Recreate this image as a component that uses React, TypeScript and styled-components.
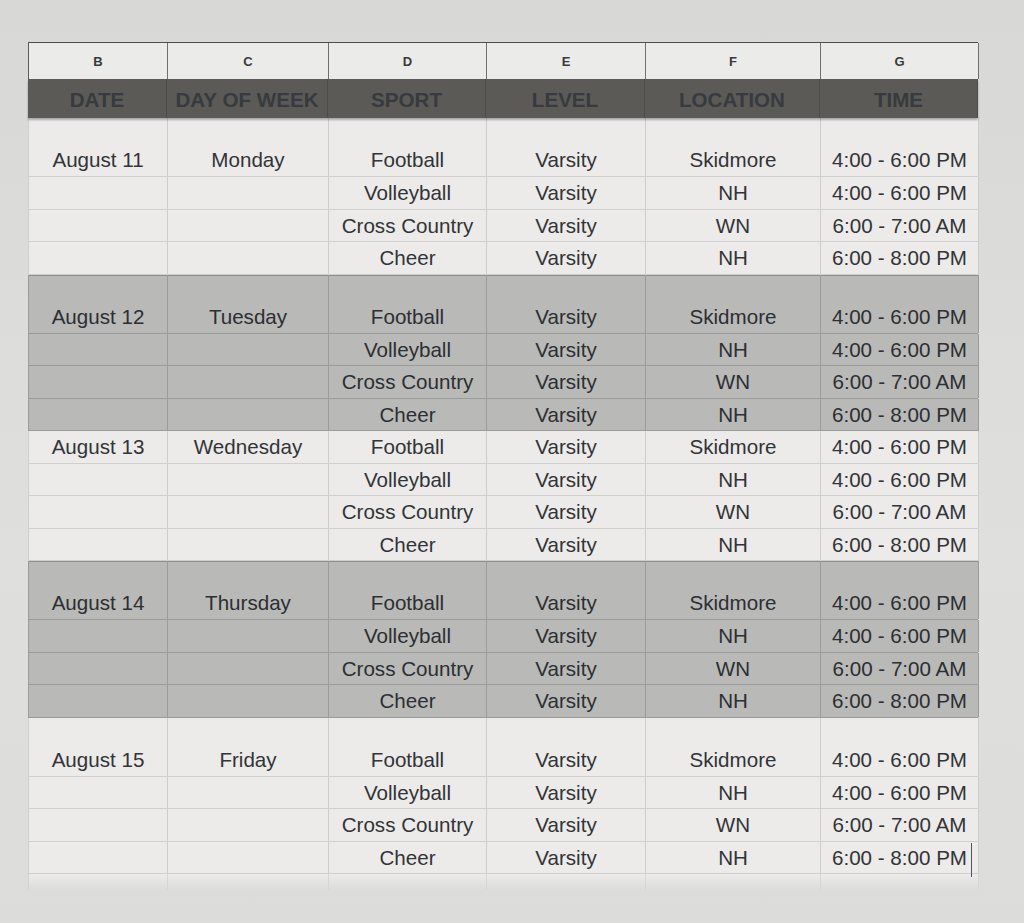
import React from 'react'
import styled, { createGlobalStyle } from 'styled-components'

const GlobalStyle = createGlobalStyle`
    html, body {
        margin: 0;
        padding: 0;
        background: #dcdcda;
    }
    body {
        font-family: 'Liberation Sans', Arial, sans-serif;
    }
`

const COLS = '139px 161px 158px 159px 175px 158px'

interface ISession {
    sport: string
    location: string
    time: string
}

interface IDay {
    date: string
    weekday: string
    shade: boolean
    tall: boolean
}

const sessions: ISession[] = [
    { sport: 'Football', location: 'Skidmore', time: '4:00 - 6:00 PM' },
    { sport: 'Volleyball', location: 'NH', time: '4:00 - 6:00 PM' },
    { sport: 'Cross Country', location: 'WN', time: '6:00 - 7:00 AM' },
    { sport: 'Cheer', location: 'NH', time: '6:00 - 8:00 PM' }
]

const days: IDay[] = [
    { date: 'August 11', weekday: 'Monday', shade: false, tall: true },
    { date: 'August 12', weekday: 'Tuesday', shade: true, tall: true },
    { date: 'August 13', weekday: 'Wednesday', shade: false, tall: false },
    { date: 'August 14', weekday: 'Thursday', shade: true, tall: true },
    { date: 'August 15', weekday: 'Friday', shade: false, tall: true }
]

const letters = ['B', 'C', 'D', 'E', 'F', 'G']
const titles = ['DATE', 'DAY OF WEEK', 'SPORT', 'LEVEL', 'LOCATION', 'TIME']

export default function App() {
    return (
        <Page>
            <GlobalStyle />
            <Sheet>
                <LetterRow>
                    {letters.map(l => (
                        <LetterCell key={l}>{l}</LetterCell>
                    ))}
                </LetterRow>
                <TitleBar>
                    {titles.map(t => (
                        <TitleCell key={t}>{t}</TitleCell>
                    ))}
                </TitleBar>
                {days.map(day => (
                    <Group key={day.date} shade={day.shade}>
                        {sessions.map((s, i) => {
                            // the cursor sits in the very last cell
                            const last = day.date === 'August 15' && i === sessions.length - 1
                            return (
                                <Row key={s.sport} shade={day.shade} tall={day.tall && i === 0}>
                                    <Cell>{i === 0 ? day.date : ''}</Cell>
                                    <Cell>{i === 0 ? day.weekday : ''}</Cell>
                                    <Cell>{s.sport}</Cell>
                                    <Cell>Varsity</Cell>
                                    <Cell>{s.location}</Cell>
                                    <Cell>
                                        {s.time}
                                        {last && <Caret />}
                                    </Cell>
                                </Row>
                            )
                        })}
                    </Group>
                ))}
                <StubRow>
                    {letters.map(l => (
                        <StubCell key={l} />
                    ))}
                </StubRow>
            </Sheet>
        </Page>
    )
}

const Page = styled.div`
    min-height: 923px;
    padding: 42px 0 0 28px;
    box-sizing: border-box;
    background: linear-gradient(180deg, #d8d8d6 0%, #dfdfdd 60%, #dcdcda 100%);
`

const Sheet = styled.div`
    width: 950px;
    display: flex;
    flex-direction: column;
    background: #ecebe9;
`

const LetterRow = styled.div`
    display: grid;
    grid-template-columns: ${COLS};
    height: 37px;
    border-top: 1px solid #4e4e4c;
    border-left: 1px solid #5a5a58;
    box-sizing: border-box;
    background: #ebebe9;
`

const LetterCell = styled.div`
    display: flex;
    align-items: center;
    justify-content: center;
    border-right: 1px solid #6f6f6d;
    font-size: 13px;
    font-weight: 700;
    color: #3a3a3a;
`

const TitleBar = styled.div`
    display: grid;
    grid-template-columns: ${COLS};
    height: 39px;
    background: #5b5a56;
    box-shadow: 0 2px 2px rgba(0, 0, 0, 0.28);
    position: relative;
    z-index: 1;
`

const TitleCell = styled.div`
    display: flex;
    align-items: center;
    justify-content: center;
    border-right: 1px solid #4d4c49;
    font-size: 20.6px;
    font-weight: 700;
    color: #373a3f;
    padding-top: 2px;
`

const Group = styled.div<{ shade: boolean }>`
    display: flex;
    flex-direction: column;
    background: ${p => (p.shade ? '#b9b9b7' : '#ecebe9')};
    box-shadow: ${p => (p.shade ? 'inset 0 1px 0 #8e8e8c' : 'none')};
`

const Row = styled.div<{ shade: boolean; tall: boolean }>`
    display: grid;
    grid-template-columns: ${COLS};
    height: ${p => (p.tall ? 59 : 32.5)}px;
    box-sizing: border-box;
    border-bottom: 1px solid ${p => (p.shade ? '#9b9b99' : '#cfcfcd')};
    border-left: 1px solid ${p => (p.shade ? '#9b9b99' : '#cfcfcd')};
    color: ${p => (p.shade ? '#2c2f33' : '#323438')};

    & > div {
        border-right: 1px solid ${p => (p.shade ? '#9b9b99' : '#cdcdcb')};
    }
`

const Cell = styled.div`
    position: relative;
    display: flex;
    align-items: flex-end;
    justify-content: center;
    font-size: 20.6px;
    line-height: 32px;
    white-space: nowrap;
`

const Caret = styled.span`
    position: absolute;
    right: 6px;
    top: 1px;
    bottom: -3px;
    width: 1px;
    background: #4a5668;
`

const StubRow = styled.div`
    display: grid;
    grid-template-columns: ${COLS};
    height: 16px;
    border-left: 1px solid #d2d2d0;
    background: linear-gradient(180deg, #ecebe9 0%, #dcdcda 100%);
`

const StubCell = styled.div`
    border-right: 1px solid #d6d6d4;
`
